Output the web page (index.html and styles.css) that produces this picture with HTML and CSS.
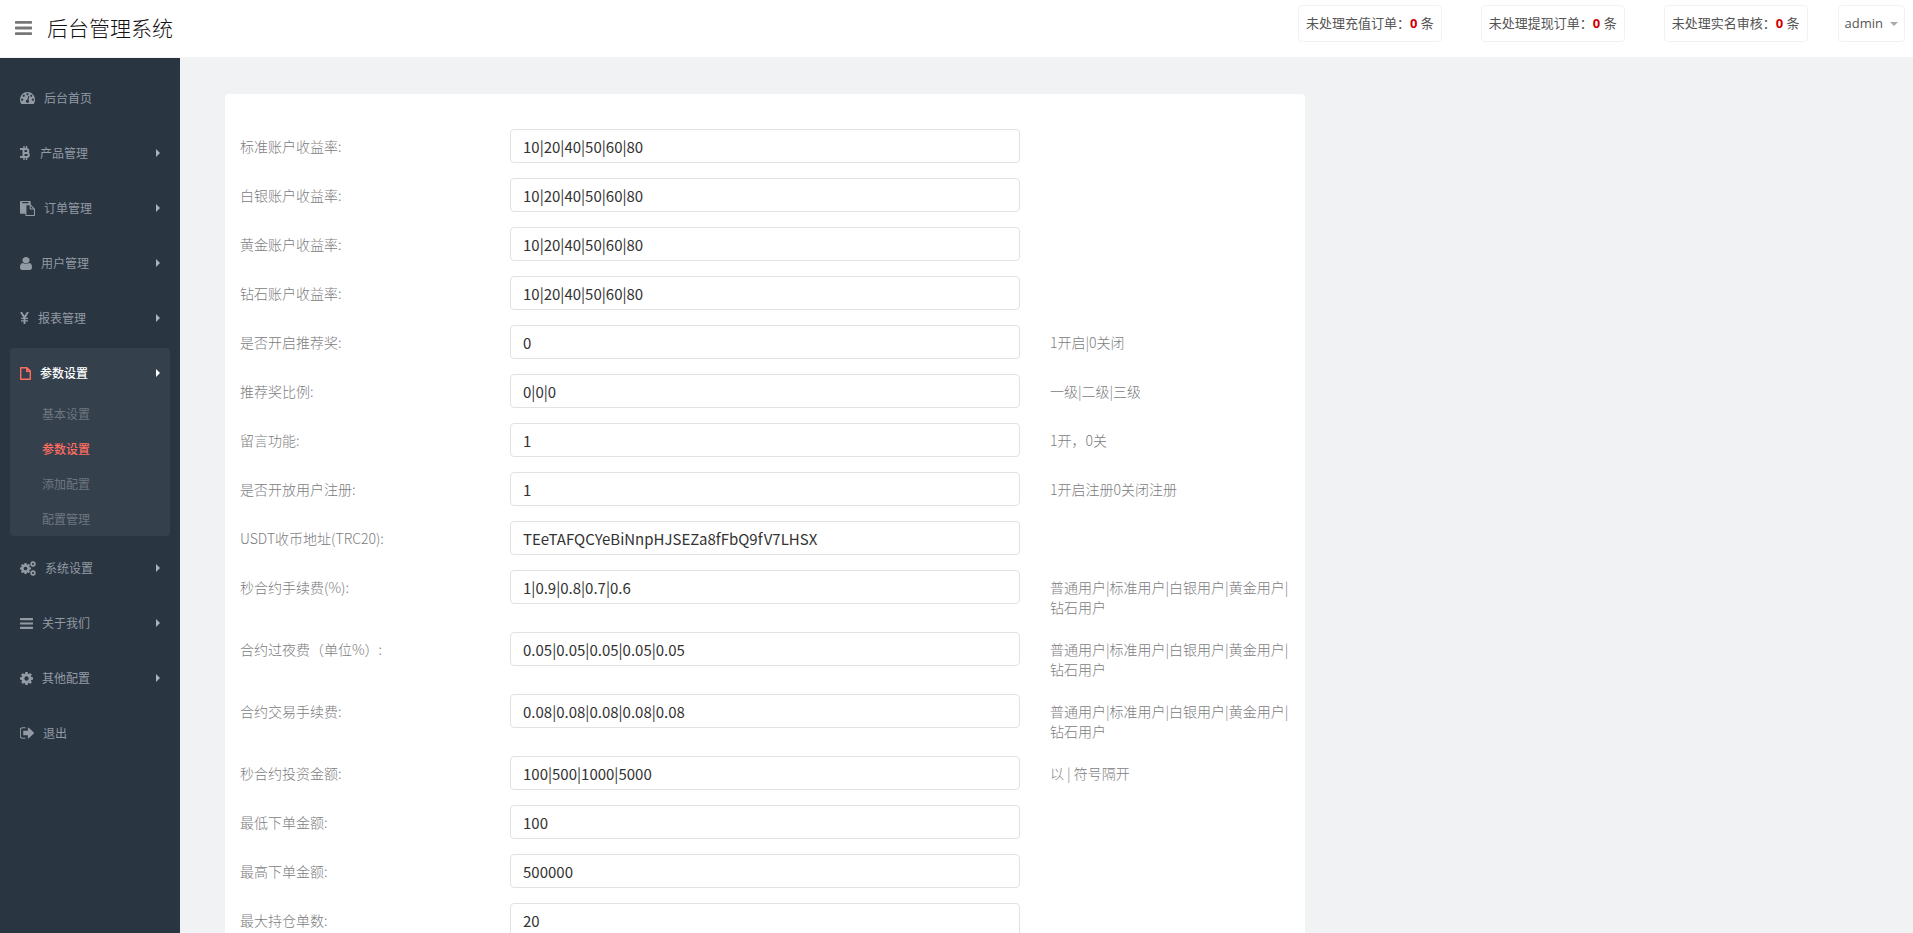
FILE: index.html
```html
<!DOCTYPE html>
<html lang="zh-CN">
<head>
<meta charset="utf-8">
<title>后台管理系统</title>
<link rel="stylesheet" href="styles.css">
</head>
<body>
<svg class="defs" aria-hidden="true">
  <symbol id="bars" viewBox="128 256 1536 1280" preserveAspectRatio="none"><path d="M1664 1344v128q0 26-19 45t-45 19h-1408q-26 0-45-19t-19-45v-128q0-26 19-45t45-19h1408q26 0 45 19t19 45zm0-512v128q0 26-19 45t-45 19h-1408q-26 0-45-19t-19-45v-128q0-26 19-45t45-19h1408q26 0 45 19t19 45zm0-512v128q0 26-19 45t-45 19h-1408q-26 0-45-19t-19-45v-128q0-26 19-45t45-19h1408q26 0 45 19t19 45z"/></symbol>
  <symbol id="cog" viewBox="128 128 1536 1536"><path d="M1152 896q0-106-75-181t-181-75-181 75-75 181 75 181 181 75 181-75 75-181zm512-109v222q0 12-8 23t-20 13l-185 28q-19 54-39 91 35 50 107 138 10 12 10 25t-9 23q-27 37-99 108t-94 71q-12 0-26-9l-138-108q-44 23-91 38-16 136-29 186-7 28-36 28h-222q-14 0-24.5-8.5t-11.5-21.5l-28-184q-49-16-90-37l-141 107q-10 9-25 9-14 0-25-11-126-114-165-168-7-10-7-23 0-12 8-23 15-21 51-66.5t54-70.5q-27-50-41-99l-183-27q-13-2-21-12.5t-8-23.5v-222q0-12 8-23t19-13l186-28q14-46 39-92-40-57-107-138-10-12-10-24 0-10 9-23 26-36 98.5-107.5t94.5-71.5q13 0 26 10l138 107q44-23 91-38 16-136 29-186 7-28 36-28h222q14 0 24.5 8.5t11.5 21.5l28 184q49 16 90 37l142-107q9-9 24-9 13 0 25 10 129 119 165 170 7 8 7 22 0 12-8 23-15 21-51 66.5t-54 70.5q26 50 41 98l183 28q13 2 21 12.5t8 23.5z"/></symbol>
  <symbol id="cogs" viewBox="0 0 16 15"><use href="#cog" x="0" y="2" width="11" height="11"/><use href="#cog" x="10" y="0" width="6" height="6"/><use href="#cog" x="10" y="9" width="6" height="6"/></symbol>
  <symbol id="user" viewBox="256 128 1280 1536" preserveAspectRatio="none"><path d="M1536 1399q0 109-62.5 187t-150.5 78h-854q-88 0-150.5-78t-62.5-187q0-85 8.5-160.5t31.5-152 58.5-131 94-89 134.5-34.5q131 128 313 128t313-128q76 0 134.5 34.5t94 89 58.5 131 31.5 152 8.5 160.5zm-256-887q0 159-112.5 271.5t-271.5 112.5-271.5-112.5-112.5-271.5 112.5-271.5 271.5-112.5 271.5 112.5 112.5 271.5z"/></symbol>
  <symbol id="exit" viewBox="96 256 1536 1280"><path d="M704 1440q0 4 1 20t.5 26.5-3 23.5-10 19.5-20.5 6.5h-320q-119 0-203.5-84.5t-84.5-203.5v-704q0-119 84.5-203.5t203.5-84.5h320q13 0 22.5 9.5t9.5 22.5q0 4 1 20t.5 26.5-3 23.5-10 19.5-20.5 6.5h-320q-66 0-113 47t-47 113v704q0 66 47 113t113 47h312l11.5 1 11.5 3 8 5.5 7 9 2 13.5zm928-544q0 26-19 45l-544 544q-19 19-45 19t-45-19-19-45v-288h-448q-26 0-45-19t-19-45v-384q0-26 19-45t45-19h448v-288q0-26 19-45t45-19 45 19l544 544q19 19 19 45z"/></symbol>
  <symbol id="file" viewBox="0 0 11 13"><path fill="none" stroke="currentColor" stroke-width="1.4" stroke-linejoin="round" d="M.7.7h6.2l3.4 3.4v8.2H.7zM6.7.7v3.6h3.6"/></symbol>
  <symbol id="dash" viewBox="0 256 1792 1408" preserveAspectRatio="none"><path d="M384 1152q0-53-37.5-90.5t-90.5-37.5-90.5 37.5-37.5 90.5 37.5 90.5 90.5 37.5 90.5-37.5 37.5-90.5zm192-448q0-53-37.5-90.5t-90.5-37.5-90.5 37.5-37.5 90.5 37.5 90.5 90.5 37.5 90.5-37.5 37.5-90.5zm428 481l101-382q6-26-7.5-48.5t-38.5-29.5-48 6.5-30 39.5l-101 382q-60 5-107 43.5t-63 98.5q-20 77 20 146t117 89 146-20 89-117q16-60-6-117t-72-91zm660-33q0-53-37.5-90.5t-90.5-37.5-90.5 37.5-37.5 90.5 37.5 90.5 90.5 37.5 90.5-37.5 37.5-90.5zm-640-640q0-53-37.5-90.5t-90.5-37.5-90.5 37.5-37.5 90.5 37.5 90.5 90.5 37.5 90.5-37.5 37.5-90.5zm448 192q0-53-37.5-90.5t-90.5-37.5-90.5 37.5-37.5 90.5 37.5 90.5 90.5 37.5 90.5-37.5 37.5-90.5zm320 448q0 261-141 483-19 29-54 29h-1402q-35 0-54-29-141-221-141-483 0-182 71-348t191-286 286-191 348-71 348 71 286 191 191 286 71 348z"/></symbol>
  <symbol id="paste" viewBox="0 0 1792 1792"><path d="M768 1664h896v-640h-416q-40 0-68-28t-28-68v-416h-384v1152zm256-1440v-64q0-13-9.5-22.5t-22.5-9.5h-704q-13 0-22.5 9.5t-9.5 22.5v64q0 13 9.5 22.5t22.5 9.5h704q13 0 22.5-9.5t9.5-22.5zm256 672h299l-299-299v299zm512 128v672q0 40-28 68t-68 28h-960q-40 0-68-28t-28-68v-160h-544q-40 0-68-28t-28-68v-1344q0-40 28-68t68-28h1088q40 0 68 28t28 68v328q21 13 36 28l408 408q28 28 48 76t20 88z"/></symbol>
  <symbol id="btc" viewBox="0 0 11 14"><path fill="none" stroke="currentColor" stroke-width="2" d="M0 3h6.3a2 2 0 0 1 0 4H3.2M0 11h6.8a2 2 0 0 0 0-4H3M3.500 3v8"/><path fill="none" stroke="currentColor" stroke-width="1.4" d="M4 0v2.500M6.500 0v2.500M4 11.500V14M6.500 11.500V14"/></symbol>
  <symbol id="yen" viewBox="0 0 9 12"><path fill="none" stroke="currentColor" stroke-width="1.9" d="M1 0l3.500 5.600L8 0M4.500 5v7"/><path fill="none" stroke="currentColor" stroke-width="1.2" d="M1 6.400h7M1 8.900h7"/></symbol>
</svg>

<header class="topbar">
  <button class="toggle" type="button" aria-label="菜单"><svg><use href="#bars"/></svg></button>
  <a class="brand" href="#">后台管理系统</a>
  <div class="notices">
    <a class="pill" href="#">未处理充值订单：<b>0</b> 条</a>
    <a class="pill" href="#">未处理提现订单：<b>0</b> 条</a>
    <a class="pill" href="#">未处理实名审核：<b>0</b> 条</a>
  </div>
  <button class="pill account" type="button">admin<span class="caret"></span></button>
</header>

<div class="layout">
  <nav class="sidebar">
    <ul class="menu">
      <li><a href="#"><svg class="i-dash"><use href="#dash"/></svg>后台首页</a></li>
      <li><a class="more" href="#"><svg class="i-btc"><use href="#btc"/></svg>产品管理</a></li>
      <li><a class="more" href="#"><svg class="i-paste"><use href="#paste"/></svg>订单管理</a></li>
      <li><a class="more" href="#"><svg class="i-user"><use href="#user"/></svg>用户管理</a></li>
      <li><a class="more" href="#"><svg class="i-yen"><use href="#yen"/></svg>报表管理</a></li>
      <li class="open"><a class="more" href="#"><svg class="i-file"><use href="#file"/></svg>参数设置</a>
        <ul class="sub">
          <li><a href="#">基本设置</a></li>
          <li><a class="current" href="#">参数设置</a></li>
          <li><a href="#">添加配置</a></li>
          <li><a href="#">配置管理</a></li>
        </ul>
      </li>
      <li><a class="more" href="#"><svg class="i-cogs"><use href="#cogs"/></svg>系统设置</a></li>
      <li><a class="more" href="#"><svg class="i-bars"><use href="#bars"/></svg>关于我们</a></li>
      <li><a class="more" href="#"><svg class="i-cog"><use href="#cog"/></svg>其他配置</a></li>
      <li><a href="#"><svg class="i-exit"><use href="#exit"/></svg>退出</a></li>
    </ul>
  </nav>

  <main class="content">
    <form class="panel">
      <div class="row"><label for="f1">标准账户收益率:</label><div class="field"><input id="f1" type="text" value="10|20|40|50|60|80"></div></div>
      <div class="row"><label for="f2">白银账户收益率:</label><div class="field"><input id="f2" type="text" value="10|20|40|50|60|80"></div></div>
      <div class="row"><label for="f3">黄金账户收益率:</label><div class="field"><input id="f3" type="text" value="10|20|40|50|60|80"></div></div>
      <div class="row"><label for="f4">钻石账户收益率:</label><div class="field"><input id="f4" type="text" value="10|20|40|50|60|80"></div></div>
      <div class="row"><label for="f5">是否开启推荐奖:</label><div class="field"><input id="f5" type="text" value="0"></div><p class="hint">1开启|0关闭</p></div>
      <div class="row"><label for="f6">推荐奖比例:</label><div class="field"><input id="f6" type="text" value="0|0|0"></div><p class="hint">一级|二级|三级</p></div>
      <div class="row"><label for="f7">留言功能:</label><div class="field"><input id="f7" type="text" value="1"></div><p class="hint">1开，0关</p></div>
      <div class="row"><label for="f8">是否开放用户注册:</label><div class="field"><input id="f8" type="text" value="1"></div><p class="hint">1开启注册0关闭注册</p></div>
      <div class="row"><label for="f9">USDT收币地址(TRC20):</label><div class="field"><input id="f9" type="text" value="TEeTAFQCYeBiNnpHJSEZa8fFbQ9fV7LHSX"></div></div>
      <div class="row"><label for="f10">秒合约手续费(%):</label><div class="field"><input id="f10" type="text" value="1|0.9|0.8|0.7|0.6"></div><p class="hint">普通用户|标准用户|白银用户|黄金用户|钻石用户</p></div>
      <div class="row"><label for="f11">合约过夜费（单位%）:</label><div class="field"><input id="f11" type="text" value="0.05|0.05|0.05|0.05|0.05"></div><p class="hint">普通用户|标准用户|白银用户|黄金用户|钻石用户</p></div>
      <div class="row"><label for="f12">合约交易手续费:</label><div class="field"><input id="f12" type="text" value="0.08|0.08|0.08|0.08|0.08"></div><p class="hint">普通用户|标准用户|白银用户|黄金用户|钻石用户</p></div>
      <div class="row"><label for="f13">秒合约投资金额:</label><div class="field"><input id="f13" type="text" value="100|500|1000|5000"></div><p class="hint">以 | 符号隔开</p></div>
      <div class="row"><label for="f14">最低下单金额:</label><div class="field"><input id="f14" type="text" value="100"></div></div>
      <div class="row"><label for="f15">最高下单金额:</label><div class="field"><input id="f15" type="text" value="500000"></div></div>
      <div class="row"><label for="f16">最大持仓单数:</label><div class="field"><input id="f16" type="text" value="20"></div></div>
    </form>
  </main>
</div>
</body>
</html>
```
FILE: styles.css
```css
* { box-sizing: border-box; }

body {
  margin: 0;
  height: 100vh;
  overflow: hidden;
  display: flex;
  flex-direction: column;
  background: #f1f2f4;
  color: #7c7c80;
  font: 14px/20px "Noto Sans CJK SC", sans-serif;
}

a { color: inherit; text-decoration: none; }
ul { list-style: none; margin: 0; padding: 0; }
button { font: inherit; cursor: pointer; }
svg { display: block; fill: currentColor; flex: none; }
.defs { position: absolute; width: 0; height: 0; }

/* Top bar */
.topbar {
  flex: none;
  display: flex;
  align-items: flex-start;
  height: 58px;
  padding: 5px 8px 0 15px;
  background: #fff;
  border-bottom: 1px solid #f1f2f4;
}
.toggle {
  margin: 16px 15px 0 0;
  padding: 0;
  border: 0;
  background: none;
  color: #777;
}
.toggle svg { width: 17px; height: 14px; }
.brand {
  color: #111;
  font-size: 21px;
  font-weight: 300;
  line-height: 44px;
}
.notices { display: flex; gap: 39px; margin: 0 30px 0 auto; }
.pill {
  height: 37px;
  padding: 0 7px;
  border: 1px solid #f1f2f4;
  border-radius: 4px;
  background: #fff;
  color: #555;
  font-family: "Open Sans", "Noto Sans CJK SC", sans-serif;
  font-size: 13px;
  line-height: 35px;
  white-space: nowrap;
}
.pill b { color: #d00000; }
.account {
  display: flex;
  align-items: center;
  gap: 7px;
  padding: 0 6px;
}
.caret {
  border: 4px solid transparent;
  border-top-color: #aaa;
  border-bottom: 0;
}

/* Side menu */
.layout { flex: 1; display: flex; min-height: 0; }
.sidebar {
  flex: none;
  width: 180px;
  padding: 15px 10px;
  background: #2a3542;
  color: #929aa3;
  font-size: 12px;
}
.menu { display: flex; flex-direction: column; gap: 7px; }
.menu > li { border-radius: 4px; }
.menu > li > a {
  display: flex;
  align-items: center;
  gap: 9px;
  height: 48px;
  padding: 2px 10px 0;
}
.more::after {
  content: "";
  margin-left: auto;
  border: 4px solid transparent;
  border-left-color: #a9b3bb;
  border-right: 0;
}
.open { background: #35404d; }
.open > a { color: #fff; font-weight: 500; }
.open > a svg { color: #ff6c60; }
.open > a::after { border-left-color: #fff; }
.sub a {
  display: block;
  padding-left: 32px;
  color: #6d7680;
  line-height: 35px;
}
.sub .current { color: #ff6c60; font-weight: 500; }

.i-dash { width: 15px; height: 12px; }
.i-btc { width: 11px; height: 14px; }
.i-paste { width: 15px; height: 15px; }
.i-user { width: 12px; height: 13px; }
.i-yen { width: 9px; height: 12px; }
.i-file { width: 11px; height: 13px; }
.i-cogs { width: 16px; height: 15px; }
.i-bars { width: 13px; height: 11px; }
.i-cog { width: 13px; height: 13px; }
.i-exit { width: 14px; height: 12px; }

/* Settings form */
.content { flex: 1; padding: 36px 45px 0; overflow: hidden; }
.panel {
  max-width: 1080px;
  padding: 35px 0 15px;
  border-radius: 4px;
  background: #fff;
}
.row {
  display: grid;
  grid-template-columns: 3fr 6fr 3fr;
  align-items: start;
  margin-bottom: 15px;
}
.row label, .hint {
  margin: 0;
  padding: 7px 15px 0;
  font-weight: 300;
}
.field { padding: 0 15px; }
.field input {
  display: block;
  width: 100%;
  height: 34px;
  padding: 6px 12px;
  border: 1px solid #e2e2e4;
  border-radius: 4px;
  background: #fff;
  color: #333;
  font: 15px/20px "Noto Sans CJK SC", sans-serif;
}
```
